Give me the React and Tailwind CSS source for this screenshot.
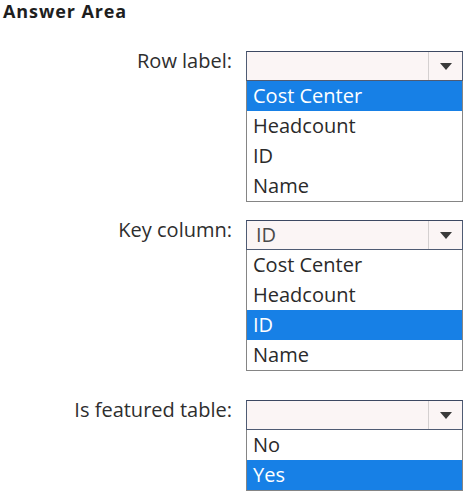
import React from 'react';

const sections = [
  { label: 'Row label:', value: '', options: ['Cost Center', 'Headcount', 'ID', 'Name'], selected: 'Cost Center', gap: 'mt-[29px]' },
  { label: 'Key column:', value: 'ID', options: ['Cost Center', 'Headcount', 'ID', 'Name'], selected: 'ID', gap: 'mt-[18px]' },
  { label: 'Is featured table:', value: '', options: ['No', 'Yes'], selected: 'Yes', gap: 'mt-[29px]' },
];

const Arrow = () => (
  <svg width="12" height="7" viewBox="0 0 12 7">
    <path d="M0 0 H12 L6 7 Z" fill="#3a3a3a" />
  </svg>
);

const Dropdown = ({ value, options, selected }) => (
  <div className="ml-[14px] w-[217px]">
    <div className="h-[30px] flex border border-[#4f5b73] border-t-[#3c4862] bg-[#fbf5f5]">
      <div className="flex-1 pl-[9px] leading-[28px] text-[#4a4a4a]">{value}</div>
      <div className="w-[34px] flex items-center justify-center border-l border-[#d4d0d0]">
        <Arrow />
      </div>
    </div>
    <div className="border-x border-b border-[#858585] bg-white">
      {options.map(opt => (
        <div
          key={opt}
          className={`h-[30px] leading-[30px] pl-[6px] ${opt === selected ? 'bg-[#1780e6] text-white' : 'text-[#2a2a2a]'}`}
        >
          {opt}
        </div>
      ))}
    </div>
  </div>
);

export default function App() {
  return (
    <div className="w-[468px] h-[492px] bg-white overflow-hidden font-['Open_Sans',sans-serif] text-[#262626]">
      <div className="pl-[3px] text-[18px] leading-[22px] font-bold tracking-[0.9px] text-[#1e1e1e]">Answer Area</div>

      <div className="flex flex-col">
        {sections.map(s => (
          <div key={s.label} className={`flex items-start text-[20px] ${s.gap}`}>
            <div className="w-[232px] text-right leading-[30px] -mt-[5px] text-[#2e2e2e]">{s.label}</div>
            <Dropdown value={s.value} options={s.options} selected={s.selected} />
          </div>
        ))}
      </div>
    </div>
  );
}
